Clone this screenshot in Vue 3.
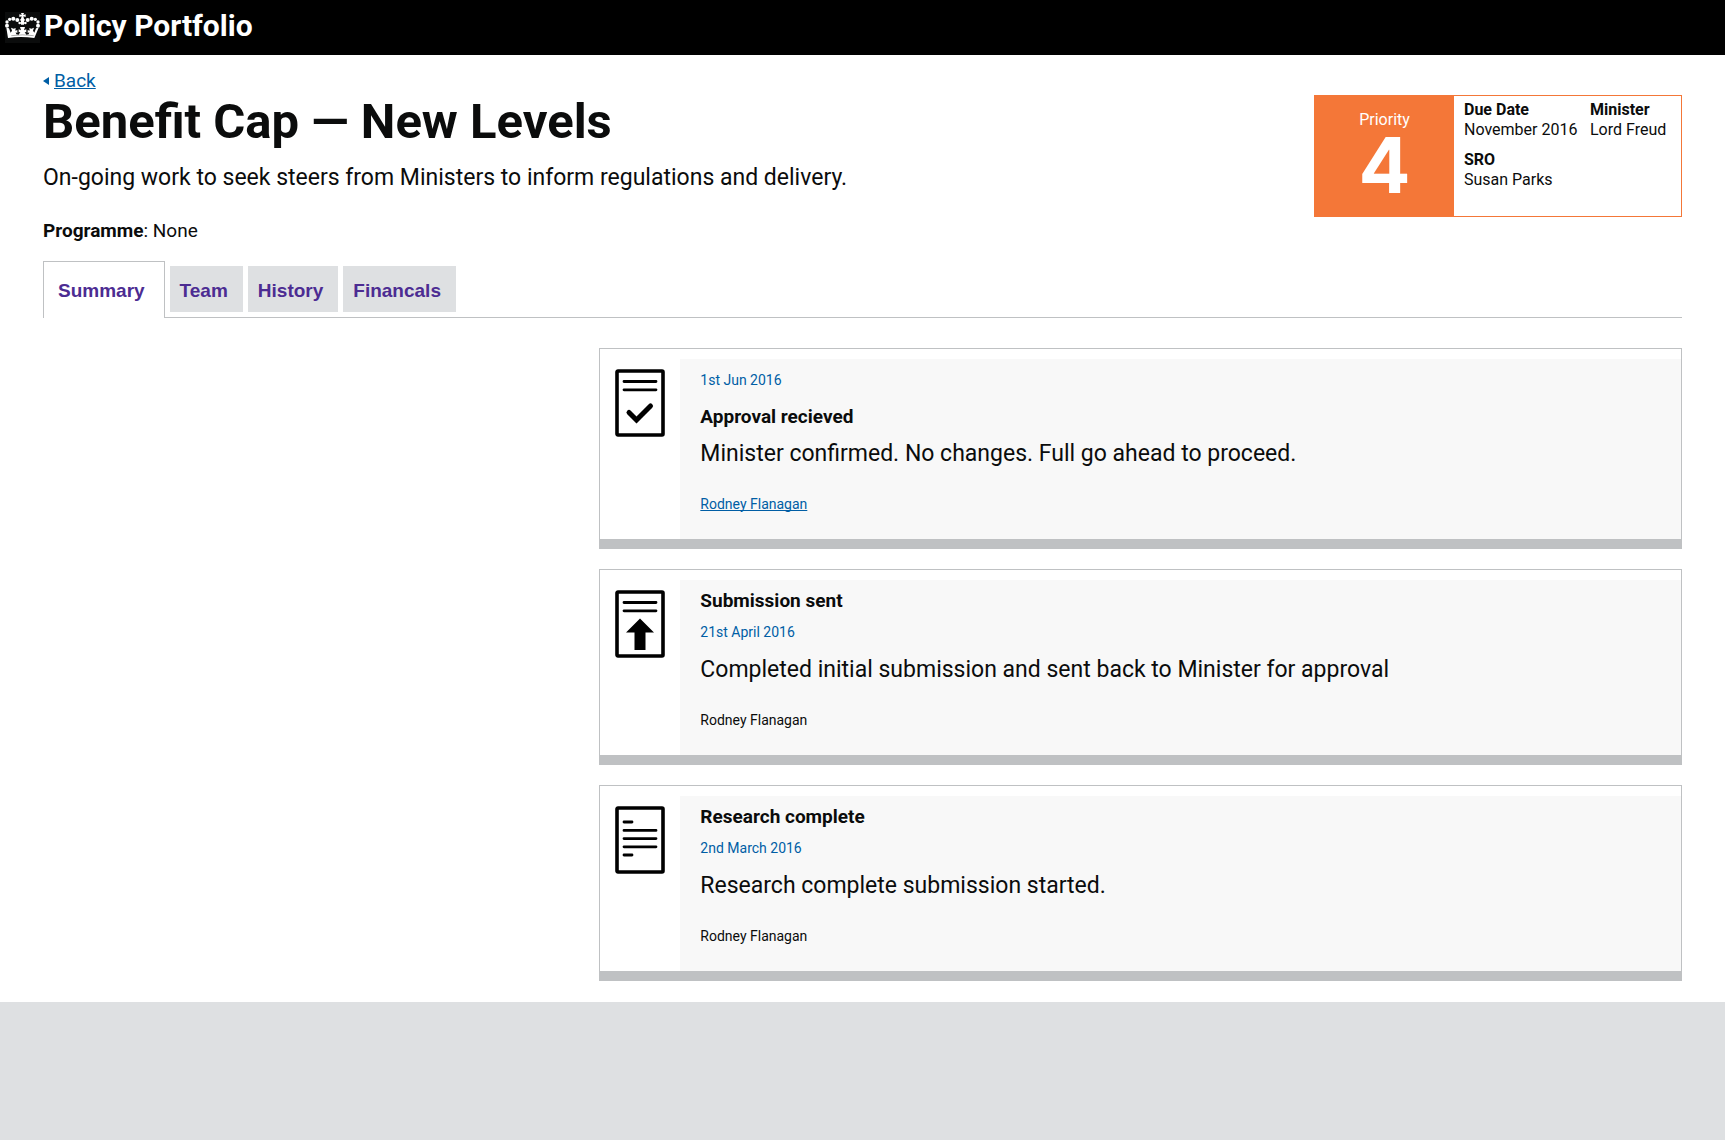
<script setup>
const facts = [
  { term: 'Due Date', value: 'November 2016' },
  { term: 'Minister', value: 'Lord Freud' },
  { term: 'SRO', value: 'Susan Parks' },
]

const tabs = ['Summary', 'Team', 'History', 'Financals']

const events = [
  {
    title: 'Approval recieved',
    date: '1st Jun 2016',
    text: 'Minister confirmed. No changes. Full go ahead to proceed.',
    author: 'Rodney Flanagan',
    icon: 'tick',
    dateFirst: true,
    linked: true,
  },
  {
    title: 'Submission sent',
    date: '21st April 2016',
    text: 'Completed initial submission and sent back to Minister for approval',
    author: 'Rodney Flanagan',
    icon: 'arrow',
  },
  {
    title: 'Research complete',
    date: '2nd March 2016',
    text: 'Research complete submission started.',
    author: 'Rodney Flanagan',
    icon: 'lines',
  },
]
</script>

<template>
  <header class="banner">
    <svg class="crown" viewBox="0 0 105 93" aria-hidden="true">
      <rect width="105" height="93" fill="#0b0c0c" />
      <g fill="#fff">
        <path d="M48 3h9l-2 6 7-2v8l-7-2 2 7 3 3-3 5v10h-9V28l-3-5 3-3 2-7-7 2V7l7 2z" />
        <circle cx="44" cy="33" r="4" /><circle cx="61" cy="33" r="4" />
        <circle cx="37" cy="24" r="6" /><circle cx="68" cy="24" r="6" />
        <circle cx="25" cy="20" r="6" /><circle cx="80" cy="20" r="6" />
        <circle cx="14" cy="22" r="5" /><circle cx="91" cy="22" r="5" />
        <circle cx="6" cy="30" r="5" /><circle cx="99" cy="30" r="5" />
        <circle cx="6" cy="41" r="6" /><circle cx="99" cy="41" r="6" />
        <path d="M4 47l8 2 5 13 4-6-3-9 8 3 6-2-1 8 6-2v9l-5-2 2 6 7 1 5-8-5 1v-9l7 3-3-10h15l-3 10 7-3v9l-5-1 5 8 7-1 2-6-5 2v-9l6 2-1-8 6 2 8-3-3 9 4 6 5-13 8-2-13 31q-40-6-79 0z" />
      </g>
      <path d="M19 71q34-5 67 0" fill="none" stroke="#0b0c0c" stroke-width="1" />
    </svg>
    <span class="product">Policy Portfolio</span>
  </header>

  <main class="page">
    <div class="intro">
      <div class="summary">
        <a class="back" href="#back">Back</a>
        <h1>Benefit Cap — New Levels</h1>
        <p class="lede">On-going work to seek steers from Ministers to inform regulations and delivery.</p>
        <p class="programme"><strong>Programme</strong>: None</p>
      </div>
      <aside class="status">
        <div class="priority">
          <span class="priority-label">Priority</span>
          <strong class="priority-value">4</strong>
        </div>
        <dl class="facts">
          <div v-for="fact in facts" :key="fact.term">
            <dt>{{ fact.term }}</dt>
            <dd>{{ fact.value }}</dd>
          </div>
        </dl>
      </aside>
    </div>

    <nav>
      <ul class="tabs">
        <li v-for="(tab, i) in tabs" :key="tab">
          <a :href="'#' + tab.toLowerCase()" class="tab" :class="{ active: i === 0 }">{{ tab }}</a>
        </li>
      </ul>
    </nav>

    <div class="columns">
      <div class="timeline">
        <article v-for="event in events" :key="event.title" class="event">
          <div class="event-icon">
            <svg viewBox="0 0 50 68" fill="none" stroke="#000" stroke-linecap="round" aria-hidden="true">
              <rect x="2" y="2" width="46" height="64" rx="1" stroke-width="3.6" />
              <template v-if="event.icon === 'lines'">
                <path d="M9 16h8M9 24.400h32M9 32.600h32M9 40.800h32M9 49h8" stroke-width="2.800" />
              </template>
              <template v-else>
                <path d="M9 12.500h32M9 20.800h32" stroke-width="2.800" />
                <path v-if="event.icon === 'tick'" d="M14 43.500l7.500 7.500 14-14" stroke-width="5" />
                <path v-else d="M25 28.500l14 14h-8.500V60h-11V42.500H11z" fill="#000" stroke="none" />
              </template>
            </svg>
          </div>
          <div class="event-body" :class="{ 'date-first': event.dateFirst }">
            <h2>{{ event.title }}</h2>
            <time>{{ event.date }}</time>
            <p class="event-text">{{ event.text }}</p>
            <a v-if="event.linked" class="author" href="#author">{{ event.author }}</a>
            <span v-else class="author">{{ event.author }}</span>
          </div>
        </article>
      </div>
    </div>
  </main>
</template>

<style>
body {
  background: #dee0e2;
  color: #0b0c0c;
  font-family: Roboto, "Liberation Sans", sans-serif;
}
</style>

<style scoped>
h1,
h2,
p,
dl,
dd,
ul {
  margin: 0;
  padding: 0;
}

a {
  text-underline-offset: 1px;
  text-decoration-skip-ink: none;
}

.banner {
  display: flex;
  align-items: center;
  gap: 4px;
  height: 55px;
  padding-left: 5px;
  background: #000;
  color: #fff;
}

.crown {
  width: 35px;
  height: 31px;
}

.product {
  padding-bottom: 4px;
  font-size: 30px;
  line-height: 51px;
  font-weight: 700;
}

.page {
  padding: 0 43px 21px;
  background: #fff;
}

.intro {
  display: flex;
  justify-content: space-between;
  align-items: flex-start;
  gap: 30px;
}

.summary {
  padding-top: 13px;
}

.back {
  display: inline-flex;
  align-items: center;
  gap: 5px;
  font-size: 19px;
  line-height: 25px;
  color: #005ea5;
}

.back::before {
  content: "";
  border: 4px solid transparent;
  border-left: 0;
  border-right: 6px solid #005ea5;
}

h1 {
  margin-top: 4px;
  font-size: 49px;
  line-height: 50px;
  font-weight: 700;
}

.lede {
  margin-top: 16px;
  font-size: 23px;
  line-height: 30px;
}

.programme {
  margin-top: 25px;
  font-size: 19px;
  line-height: 25px;
}

.status {
  display: flex;
  flex: none;
  margin-top: 40px;
  border: 1px solid #f47738;
  font-size: 16px;
  line-height: 20px;
}

.priority {
  display: flex;
  flex-direction: column;
  align-items: center;
  width: 139px;
  height: 120px;
  padding-top: 14px;
  box-sizing: border-box;
  background: #f47738;
  color: #fff;
}

.priority-value {
  font-family: Inter, "Liberation Sans", sans-serif;
  font-size: 77px;
  line-height: 70px;
}

.facts {
  display: grid;
  grid-template-columns: 126px 91px;
  align-content: start;
  row-gap: 10px;
  padding: 4px 0 4px 10px;
}

.facts dt {
  font-weight: 700;
}

.tabs {
  display: flex;
  align-items: center;
  gap: 5px;
  height: 56px;
  margin-top: 18px;
  border-bottom: 1px solid #bfc1c3;
  list-style: none;
}

.tab {
  display: block;
  padding: 12px 15px 8px 10px;
  background: #dee0e2;
  color: #4c2c92;
  font: 700 19px/26px "Liberation Sans", Arial, sans-serif;
  text-decoration: none;
}

.tab.active {
  margin-bottom: -1px;
  padding: 16px 19px 14px 14px;
  border: 1px solid #bfc1c3;
  border-bottom: 0;
  background: #fff;
}

.columns {
  display: grid;
  grid-template-columns: 1fr 2fr;
  column-gap: 15px;
  margin-top: 30px;
}

.timeline {
  grid-column: 2;
  display: flex;
  flex-direction: column;
  gap: 20px;
}

.event {
  display: flex;
  padding-top: 10px;
  border: 1px solid #bfc1c3;
  border-bottom-width: 10px;
}

.event-icon {
  flex: none;
  width: 80px;
  padding: 10px 0 0 15px;
  box-sizing: border-box;
}

.event-icon svg {
  display: block;
  width: 50px;
  height: 68px;
}

.event-body {
  display: flex;
  flex: 1;
  flex-direction: column;
  align-items: flex-start;
  padding: 8px 20px 25px;
  background: #f8f8f8;
}

h2 {
  font-size: 19px;
  line-height: 25px;
  font-weight: 700;
}

time,
.author {
  font-size: 14px;
  line-height: 20px;
}

time {
  margin-top: 9px;
  color: #005ea5;
}

.event-text {
  margin-top: 13px;
  font-size: 23px;
  line-height: 30px;
}

.author {
  margin-top: 25px;
}

a.author {
  color: #005ea5;
}

.date-first {
  padding-top: 11px;
}

.date-first time {
  order: -1;
  margin: 0 0 14px;
}

.date-first .event-text {
  margin-top: 10px;
}
</style>
